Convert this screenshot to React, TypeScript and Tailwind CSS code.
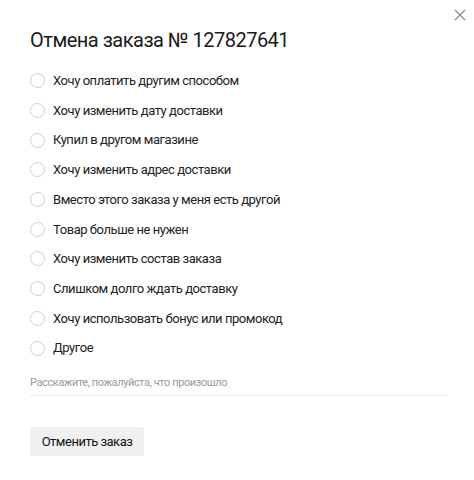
const reasons = [
  "Хочу оплатить другим способом",
  "Хочу изменить дату доставки",
  "Купил в другом магазине",
  "Хочу изменить адрес доставки",
  "Вместо этого заказа у меня есть другой",
  "Товар больше не нужен",
  "Хочу изменить состав заказа",
  "Слишком долго ждать доставку",
  "Хочу использовать бонус или промокод",
  "Другое",
];

export default function App() {
  return (
    <div className="relative w-[474px] h-[480px] bg-white text-[#222] font-['Roboto',sans-serif]">
      <button className="absolute right-[8px] top-[9px] w-[12px] h-[12px] text-[#888]">
        <svg viewBox="0 0 12 12" className="w-[12px] h-[12px]" stroke="currentColor" strokeWidth="1.2" fill="none">
          <path d="M1 1l10 10M11 1L1 11" />
        </svg>
      </button>
      <div className="pl-[30px] pr-[26px] pt-[26px]">
        <h1 className="text-[20px] leading-[28px] font-normal tracking-[-0.5px] text-[#1a1a1a]">
          Отмена заказа № 127827641
        </h1>
        <div className="mt-[12px] flex flex-col">
          {reasons.map((r) => (
            <label key={r} className="flex items-center h-[29.7px] gap-[8px] cursor-pointer">
              <span className="w-[15px] h-[15px] rounded-full border border-[#cfcfcf] bg-white shrink-0" />
              <span className="text-[13px] tracking-[-0.45px] text-[#222]">{r}</span>
            </label>
          ))}
        </div>
        <div className="mt-[6px] border-b border-[#ebebeb] pb-[2px]">
          <input
            className="w-full text-[11px] leading-[16px] tracking-[-0.4px] outline-none placeholder:text-[#9a9a9a]"
            placeholder="Расскажите, пожалуйста, что произошло"
          />
        </div>
        <button className="mt-[31px] h-[29px] w-[114px] bg-[#f0f0f0] rounded-[3px] text-[13px] tracking-[-0.5px] text-[#111]">
          Отменить заказ
        </button>
      </div>
    </div>
  );
}
